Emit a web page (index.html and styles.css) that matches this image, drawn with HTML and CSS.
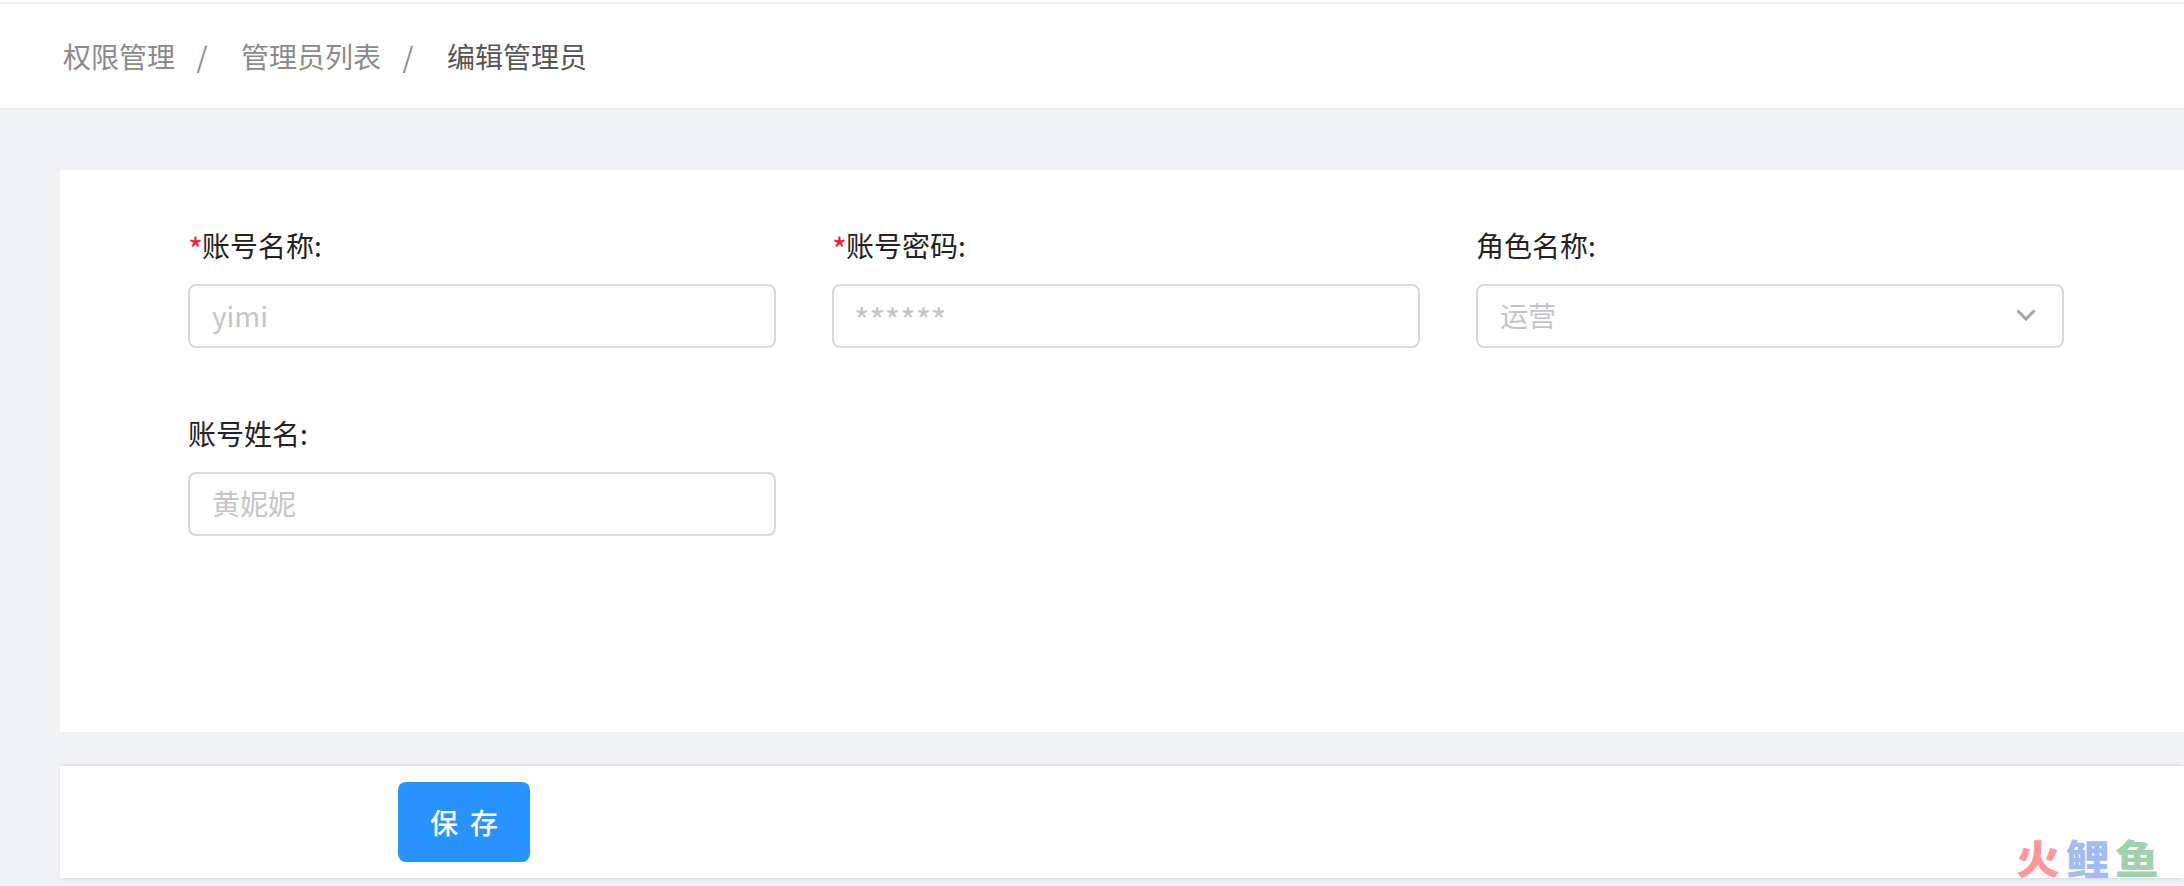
FILE: index.html
```html
<!DOCTYPE html>
<html lang="zh-CN">
<head>
<meta charset="utf-8">
<title>编辑管理员</title>
<link rel="stylesheet" href="styles.css">
</head>
<body>
<header class="header">
  <nav class="crumbs">
    <span class="crumb">权限管理</span>
    <span class="sep">/</span>
    <span class="crumb">管理员列表</span>
    <span class="sep">/</span>
    <span class="crumb current">编辑管理员</span>
  </nav>
</header>
<main class="main">
  <section class="card">
    <form class="form">
      <div class="field">
        <label class="label"><span class="req">*</span>账号名称:</label>
        <input class="input" placeholder="yimi">
      </div>
      <div class="field">
        <label class="label"><span class="req">*</span>账号密码:</label>
        <input class="input mask" placeholder="******">
      </div>
      <div class="field">
        <label class="label">角色名称:</label>
        <div class="select">
          <span class="select-text">运营</span>
          <svg class="caret" width="20" height="12" viewBox="0 0 20 12"><polyline points="1.5,1.5 10,10 18.500,1.500" fill="none" stroke="#a3a5ab" stroke-width="3"/></svg>
        </div>
      </div>
      <div class="field">
        <label class="label">账号姓名:</label>
        <input class="input" placeholder="黄妮妮">
      </div>
    </form>
  </section>
  <section class="footer">
    <button class="save" type="button">保存</button>
  </section>
</main>
<div class="mark"><span class="m1">火</span><span class="m2">鲤</span><span class="m3">鱼</span></div>
</body>
</html>
```
FILE: styles.css
```css
* { box-sizing: border-box; }
html, body { height: 100%; }
body {
  margin: 0;
  background: #fff;
  display: flex;
  flex-direction: column;
  overflow: hidden;
  font-family: "Noto Sans CJK SC", "Noto Sans", sans-serif;
  font-size: 28px;
}
.header {
  margin-top: 2px;
  height: 108px;
  border-top: 2px solid #e9e9e9;
  border-bottom: 2px solid #e9ebee;
  display: flex;
  align-items: center;
  padding-left: 63px;
  flex: none;
}
.crumbs { display: flex; align-items: center; font-size: 28px; line-height: 40px; color: #8a8a8a; }
.sep { width: 54px; text-align: center; color: #8a8a8a; margin-right: 12px; }
.crumb.current { color: #555; }
.main {
  flex: 1;
  background: #f0f2f5;
  padding: 60px 0 0 60px;
  display: flex;
  flex-direction: column;
}
.card {
  background: #fff;
  height: 562px;
  padding: 55px 0 0 128px;
  flex: none;
}
.form {
  display: grid;
  grid-template-columns: repeat(3, 588px);
  column-gap: 56px;
  row-gap: 65px;
}
.field { display: flex; flex-direction: column; }
.label { display: block; height: 40px; line-height: 40px; margin-bottom: 19px; color: #222; font-size: 28px; white-space: nowrap; }
.req { color: #e8203c; font-size: 32px; line-height: 20px; vertical-align: -5px; margin-right: -1px; }
.input, .select {
  width: 588px;
  height: 64px;
  border: 2px solid #d9d9db;
  border-radius: 8px;
  background: #fff;
  padding: 0 22px 2px;
  font-family: inherit;
  font-size: 28px;
  outline: none;
}
.input::placeholder { color: #c4c4c6; opacity: 1; }
.input.mask { font-size: 33px; padding: 6px 20px 0; }
.select { display: flex; align-items: center; justify-content: space-between; padding-right: 26px; }
.select-text { color: #c4c4c6; }
.footer {
  margin-top: 34px;
  height: 112px;
  background: #fff;
  box-shadow: 0 -3px 4px -2px rgba(0, 0, 0, .14), 0 3px 4px -2px rgba(0, 0, 0, .12);
  display: flex;
  align-items: center;
  padding-left: 338px;
  flex: none;
}
.save {
  width: 132px;
  height: 80px;
  border: 0;
  border-radius: 8px;
  background: #2892ff;
  color: #fff;
  font-family: inherit;
  font-size: 28px;
  font-weight: 500;
  letter-spacing: 12px;
  text-indent: 12px;
  padding: 0;
}
.mark {
  position: absolute;
  left: 2016px;
  top: 835px;
  display: flex;
  font-size: 40px;
  line-height: 44px;
  font-weight: 900;
  letter-spacing: 5px;
  opacity: .95;
  transform: scaleX(1.1);
  transform-origin: left center;
}
.m1 { color: #ff9193; }
.m2 { color: #9cb9f2; }
.m3 { color: #9acfa9; }
```
